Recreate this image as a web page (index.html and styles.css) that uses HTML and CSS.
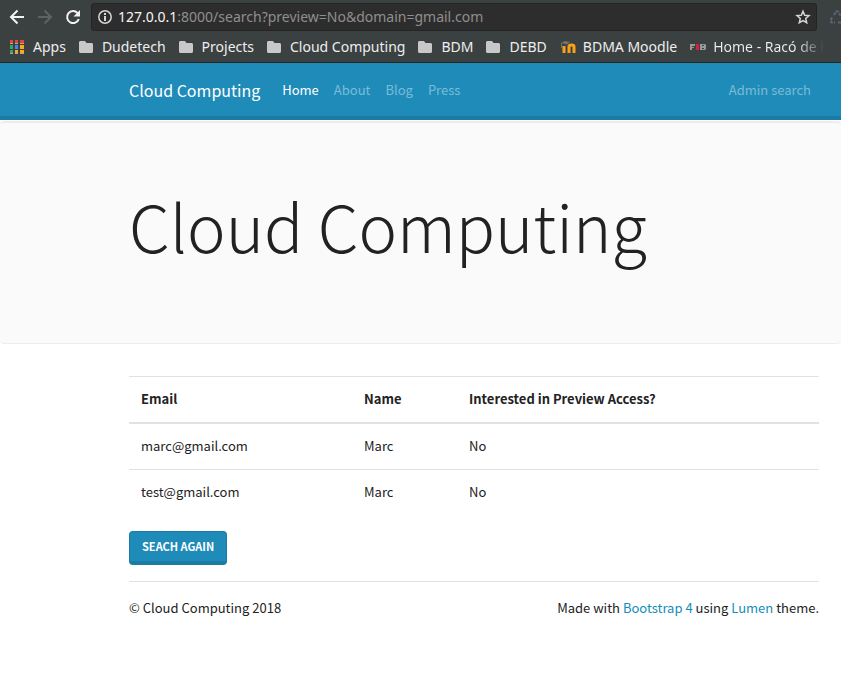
FILE: index.html
```html
<!DOCTYPE html>
<html lang="en">
<head>
<meta charset="utf-8">
<title>Cloud Computing</title>
<link rel="stylesheet" href="styles.css">
</head>
<body>
<div class="browser">
  <div class="toolbar">
    <button class="tool" aria-label="Back"><svg width="16" height="16" viewBox="0 0 16 16" fill="none" stroke="#f2f2f2" stroke-width="2"><path d="M15 8H2M8.500 1.500L2 8l6.500 6.500"/></svg></button>
    <button class="tool" aria-label="Forward" disabled><svg width="16" height="16" viewBox="0 0 16 16" fill="none" stroke="#5f6262" stroke-width="2"><path d="M1 8h13M7.500 1.500L14 8l-6.500 6.500"/></svg></button>
    <button class="tool" aria-label="Reload"><svg width="16" height="16" viewBox="0 0 16 16" fill="none" stroke="#f2f2f2" stroke-width="2"><path d="M13.800 10A6 6 0 1 1 12.500 4"/><path d="M15 1v6.500H8.500z" fill="#f2f2f2" stroke="none"/></svg></button>
    <div class="address">
      <svg width="14" height="14" viewBox="0 0 14 14" fill="none" stroke="#d6d6d6"><circle cx="7" cy="7" r="6.200" stroke-width="1.500"/><path d="M7 6v5M7 3v2" stroke-width="2"/></svg>
      <div class="url"><span class="host">127.0.0.1</span>:8000/search?preview=No&amp;domain=gmail.com</div>
      <button class="tool" aria-label="Bookmark this page"><svg width="16" height="16" viewBox="0 0 16 16" fill="none" stroke="#d6d6d6" stroke-width="1.500"><path d="M8 2.200l1.700 4 4.300.4-3.300 2.900 1 4.200L8 11.500l-3.700 2.200 1-4.200L2 6.600l4.300-.4z"/></svg></button>
    </div>
    <svg class="extension" width="16" height="16" viewBox="0 0 16 16" fill="none" stroke="#58667a" stroke-width="2"><path d="M5 6l2-3.500h2l2.500 4M3 8.500L1.500 12l1 1.500H6M9 13.500h4.500L15 11l-2-3" stroke-dasharray="3 1"/></svg>
  </div>
  <nav class="bookmarks" aria-label="Bookmarks">
    <a href="#"><svg class="apps" width="14" height="14" viewBox="0 0 14 14"><path fill="#ea4335" d="M0 0h3v3H0zM5 0h4v3H5zM10 0h4v3h-4z"/><path fill="#34a853" d="M0 5h3v4H0zM0 10h3v3H0z"/><path fill="#4285f4" d="M5 5h4v4H5z"/><path fill="#fbab12" d="M10 5h4v4h-4zM5 10h4v3H5zM10 10h4v3h-4z"/><path fill="#aaa" d="M0 3h3v1H0zM5 3h4v1H5zM10 3h4v1h-4zM0 13h3v1H0zM5 13h4v1H5zM10 13h4v1h-4z"/><path fill="#3b4141" d="M3 0h2v14H3zM8 0h2v14H8z"/></svg>Apps</a>
    <a href="#"><svg width="14" height="14" viewBox="0 0 14 14"><path class="folder" d="M1 1h5l1.500 2H13l1 1v8l-1 1H1l-1-1V2z"/></svg>Dudetech</a>
    <a href="#"><svg width="14" height="14" viewBox="0 0 14 14"><path class="folder" d="M1 1h5l1.500 2H13l1 1v8l-1 1H1l-1-1V2z"/></svg>Projects</a>
    <a href="#"><svg width="14" height="14" viewBox="0 0 14 14"><path class="folder" d="M1 1h5l1.500 2H13l1 1v8l-1 1H1l-1-1V2z"/></svg>Cloud Computing</a>
    <a href="#"><svg width="14" height="14" viewBox="0 0 14 14"><path class="folder" d="M1 1h5l1.500 2H13l1 1v8l-1 1H1l-1-1V2z"/></svg>BDM</a>
    <a href="#"><svg width="14" height="14" viewBox="0 0 14 14"><path class="folder" d="M1 1h5l1.500 2H13l1 1v8l-1 1H1l-1-1V2z"/></svg>DEBD</a>
    <a href="#" class="site"><svg width="16" height="14" viewBox="0 0 16 14" fill="none"><path d="M4 13V6M9 13V6.500q0-1.500 2.500-1.500T14 6.500V13" stroke="#f9a11b" stroke-width="3"/><path d="M1 3l4-2 5 1-3 2.500z" fill="#77736a"/><path d="M1.500 3v5" stroke="#77736a"/></svg>BDMA Moodle</a>
    <a href="#" class="site last"><svg width="16" height="14" viewBox="0 0 16 14"><path fill="#999" d="M0 4h5v2H2v1h2v1H2v2H0zM10 4h5l1 1v4l-1 1h-5z"/><path fill="#d8203c" d="M6 4h3v6H6z"/><path fill="#3b4141" d="M12 5h2v1h-2zM12 8h2v1h-2z"/></svg>Home - Racó de l</a>
  </nav>
</div>
<header class="navbar">
  <a class="brand" href="#">Cloud Computing</a>
  <nav class="links">
    <a class="active" href="#">Home</a>
    <a href="#">About</a>
    <a href="#">Blog</a>
    <a href="#">Press</a>
  </nav>
  <a class="admin" href="#">Admin search</a>
</header>
<section class="jumbotron"><h1>Cloud Computing</h1></section>
<main class="content">
  <table>
    <colgroup><col class="email"><col class="name"><col></colgroup>
    <thead><tr><th>Email</th><th>Name</th><th>Interested in Preview Access?</th></tr></thead>
    <tbody>
      <tr><td>marc@gmail.com</td><td>Marc</td><td>No</td></tr>
      <tr><td>test@gmail.com</td><td>Marc</td><td>No</td></tr>
    </tbody>
  </table>
  <button class="primary">Seach again</button>
  <footer>
    <p>© Cloud Computing 2018</p>
    <p>Made with <a href="#">Bootstrap 4</a> using <a href="#">Lumen</a> theme.</p>
  </footer>
</main>
</body>
</html>
```
FILE: styles.css
```css
* { box-sizing: border-box; }
body {
  margin: 0;
  background: #fff;
  color: #222;
  font: 13px/20px "Noto Sans CJK JP", sans-serif;
}
a { color: #158cba; text-decoration: none; }
svg { flex: none; display: block; }

.browser {
  background: #3b4141;
  border-bottom: 1px solid #222626;
  font-family: "Noto Sans", sans-serif;
}
.toolbar { display: flex; align-items: center; padding: 3px 0 0 9px; gap: 12px; overflow: hidden; }
.tool { border: 0; padding: 0; background: none; }
.address {
  flex: 1;
  display: flex;
  align-items: center;
  gap: 6px;
  height: 28px;
  margin-left: -2px;
  padding: 0 5px 0 6px;
  background: #2d2d2d;
  border: 1px solid #222525;
  border-radius: 3px;
}
.url { flex: 1; color: #8f8f8f; font-size: 14px; white-space: nowrap; }
.host { color: #f5f5f5; }
.extension { margin-right: -4px; }
.bookmarks { display: flex; height: 31px; padding: 0 0 0 10px; align-items: center; }
.bookmarks a {
  display: flex;
  align-items: center;
  gap: 9px;
  margin-right: 13px;
  color: #eee;
  font-size: 14px;
  white-space: nowrap;
}
.bookmarks .site { gap: 7px; }
.bookmarks .last {
  margin-right: 0;
  background: linear-gradient(90deg, #eee 80%, #3b4141 100%);
  background-clip: text;
  color: transparent;
}
.folder { fill: #c8c8c8; }

.navbar {
  display: flex;
  align-items: center;
  height: 57px;
  padding: 0 30px 0 129px;
  background: #1f8bb9;
  border-bottom: 4px solid #1c7ba5;
}
.navbar a { color: #7abcd8; }
.navbar .brand { color: #fff; font-size: 16px; margin-right: 22px; }
.links { display: flex; gap: 15px; flex: 1; }
.navbar .active { color: #fff; }

.jumbotron {
  margin-top: 1px;
  padding: 56px 22px 72px 129px;
  background: #fafafa;
  border: 1px solid #ededed;
  border-width: 2px 0 1px;
  border-radius: 4px;
}
h1 { margin: 0; font-size: 65px; line-height: 92px; font-weight: 200; }

.content { padding: 32px 22px 0 129px; }
table { width: 100%; table-layout: fixed; border-collapse: collapse; }
.email { width: 223px; }
.name { width: 105px; }
th, td { padding: 12px 12px 13px; text-align: left; border-top: 1px solid #dee2e6; }
thead th { border-bottom: 2px solid #dee2e6; }
.primary {
  display: block;
  height: 34px;
  margin: 16px 0;
  padding: 0 12px 1px;
  color: #fff;
  background: #1f8bb9;
  border: 1px solid #1c7ba5;
  border-bottom-width: 4px;
  border-radius: 4px;
  font: bold 11px/20px "Noto Sans CJK JP", sans-serif;
  text-transform: uppercase;
}
footer {
  display: flex;
  justify-content: space-between;
  padding-top: 16px;
  border-top: 1px solid #dfe1e3;
}
footer p { margin: 0; }
```
